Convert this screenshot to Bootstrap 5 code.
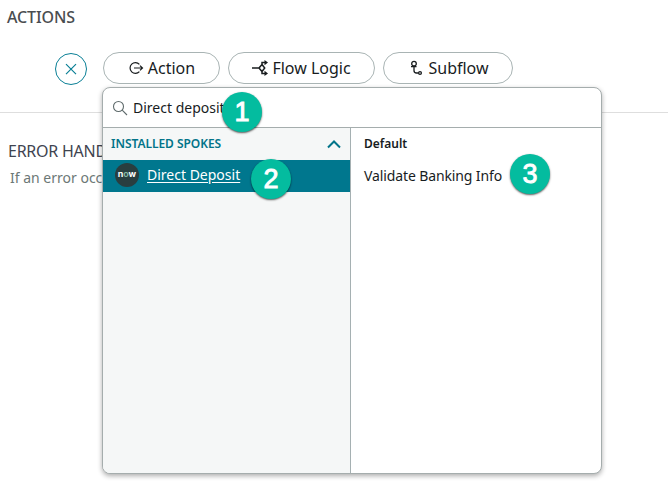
<!DOCTYPE html>
<html lang="en">
<head>
<meta charset="utf-8">
<title>Actions</title>
<link href="https://cdn.jsdelivr.net/npm/bootstrap@5.3.0/dist/css/bootstrap.min.css" rel="stylesheet">
<style>
body{font-family:"Noto Sans","Open Sans",sans-serif;color:#181c1e;width:668px;height:503px;overflow:hidden;background:#fff}
.heading{font-size:16px;font-weight:500;letter-spacing:-.1px;line-height:22px;color:#4a4d50;padding:6px 0 0 7px;height:52px}
.toolbar{height:60px;padding-left:55px;border-bottom:1px solid #dedede;box-sizing:content-box}
.close-btn{width:32px;height:32px;border:1.4px solid #0a7f96;color:#0a7f96;margin:1px 16px 0 0}
.pill{height:32px;border:1px solid #a9b4b4;font-size:16px;color:#181c1e;line-height:30px}
.w-action{width:117px}.w-logic{width:147px}.w-sub{width:130px}
.pill svg{margin-right:4px}
.w-sub svg{margin:0 3px 0 2px}
.err-title{font-size:16px;letter-spacing:-.25px;line-height:22px;color:#3f4450;padding:27px 0 0 8px;width:102px}
.err-text{font-size:14px;line-height:20px;color:#6c7876;padding:6px 0 0 10px;width:102px}
.picker{left:102px;top:87px;width:500px;height:387px;border:1px solid #a5adad;border-radius:8px;box-shadow:0 2px 5px rgba(0,0,0,.32)}
.search-row{height:40px;border-bottom:1px solid #a5adad;padding-left:9px;font-size:14px}
.search-row span{padding-left:5px}
.spokes{width:248px;background:#f5f7f7;border-right:1px solid #a5b0b2}
.spoke-head{height:32px;padding:0 9px 0 8px;font-size:12px;font-weight:600;letter-spacing:-.04px;color:#027489}
.spoke-item{height:32px;background:#00778e;padding:0 0 2px 12px;font-size:14px}
.spoke-item a{color:#fff;margin-left:8px;line-height:20px;text-underline-offset:2px}
.results{padding-left:13px}
.result-head{height:32px;line-height:31px;font-size:12px;font-weight:600}
.result-item{height:32px;line-height:32px;font-size:14px;letter-spacing:-.12px}
.step{width:40px;height:40px;background:#04bc9f;color:#fff;font:400 27px/40px "Liberation Sans",sans-serif;-webkit-text-stroke:.9px #fff;box-shadow:0 1px 2px rgba(0,0,0,.65)}
.s1{left:222px;top:92px}.s2{left:251px;top:159px}.s3{left:510px;top:154px}
</style>
<script src="https://cdn.jsdelivr.net/npm/bootstrap@5.3.0/dist/js/bootstrap.bundle.min.js"></script>
</head>
<body class="position-relative">
<div class="heading text-nowrap">ACTIONS</div>
<div class="toolbar d-flex align-items-start">
  <button class="close-btn btn rounded-circle p-0 d-flex align-items-center justify-content-center" aria-label="Close">
    <svg width="12" height="12" viewBox="0 0 12 12" fill="none" stroke="currentColor" stroke-width="1.2"><path d="M1 1.200 11 11.200M11 1.200 1 11.200"/></svg>
  </button>
  <div class="d-flex gap-2">
    <button class="pill w-action btn rounded-pill p-0 d-flex align-items-center justify-content-center">
      <svg width="16" height="14" viewBox="0 0 16 14" fill="none" stroke="currentColor" stroke-width="1.2"><path d="M11.400 3.300A5.400 5.400 0 1 0 11.400 10.700M6 7H14.500M12 4.600 14.500 7 12 9.400"/></svg>Action
    </button>
    <button class="pill w-logic btn rounded-pill p-0 d-flex align-items-center justify-content-center">
      <svg width="16" height="16" viewBox="0 0 16 16" fill="none" stroke="currentColor" stroke-width="1.500"><path d="M0 8H7M10 4.500 12.700 8 10 11.500 7 8ZM10 4.800V2.600H14M10 11.200V13.400H14"/><path d="M12.500 0 16 2.600 12.500 5.200ZM12.500 10.800 16 13.400 12.500 16Z" fill="currentColor" stroke="none"/></svg>Flow Logic
    </button>
    <button class="pill w-sub btn rounded-pill p-0 d-flex align-items-center justify-content-center">
      <svg width="16" height="16" viewBox="0 0 16 16" fill="none" stroke="currentColor" stroke-width="1.300"><circle cx="5" cy="3.700" r="2.300"/><path d="M2 6.700H7.500M5 6.500V10.500Q5 13 7.500 13H9.500"/><circle cx="11" cy="13" r="1.400"/></svg>Subflow
    </button>
  </div>
</div>
<div class="err-title text-nowrap overflow-hidden">ERROR HAND</div>
<div class="err-text text-nowrap overflow-hidden">If an error occ</div>

<div class="picker position-absolute bg-white overflow-hidden d-flex flex-column">
  <div class="search-row d-flex align-items-center flex-shrink-0">
    <svg width="16" height="16" viewBox="0 0 16 16" fill="none" stroke="#5f6b6c" stroke-width="1.100"><circle cx="6.500" cy="6.500" r="5"/><path d="M10.200 10.200 15 15"/></svg>
    <span>Direct deposit</span>
  </div>
  <div class="d-flex flex-grow-1">
    <div class="spokes flex-shrink-0">
      <div class="spoke-head d-flex align-items-center justify-content-between">INSTALLED SPOKES
        <svg width="14" height="9" viewBox="0 0 14 9" fill="none" stroke="currentColor" stroke-width="2"><path d="M1 7.500 7 1.500 13 7.500"/></svg>
      </div>
      <div class="spoke-item d-flex align-items-center">
        <svg width="24" height="24" viewBox="0 0 24 24"><circle cx="12" cy="12" r="12" fill="#293e40"/><text x="2.700" y="14.300" font-family="Inter,sans-serif" font-size="8" font-weight="700" fill="#fff" textLength="18.500" lengthAdjust="spacingAndGlyphs">n<tspan fill="#81b5a1">o</tspan>w</text></svg>
        <a href="#">Direct Deposit</a>
      </div>
    </div>
    <div class="results flex-grow-1">
      <div class="result-head">Default</div>
      <div class="result-item">Validate Banking Info</div>
    </div>
  </div>
</div>
<div class="step s1 position-absolute rounded-circle text-center">1</div>
<div class="step s2 position-absolute rounded-circle text-center">2</div>
<div class="step s3 position-absolute rounded-circle text-center">3</div>
</body>
</html>
